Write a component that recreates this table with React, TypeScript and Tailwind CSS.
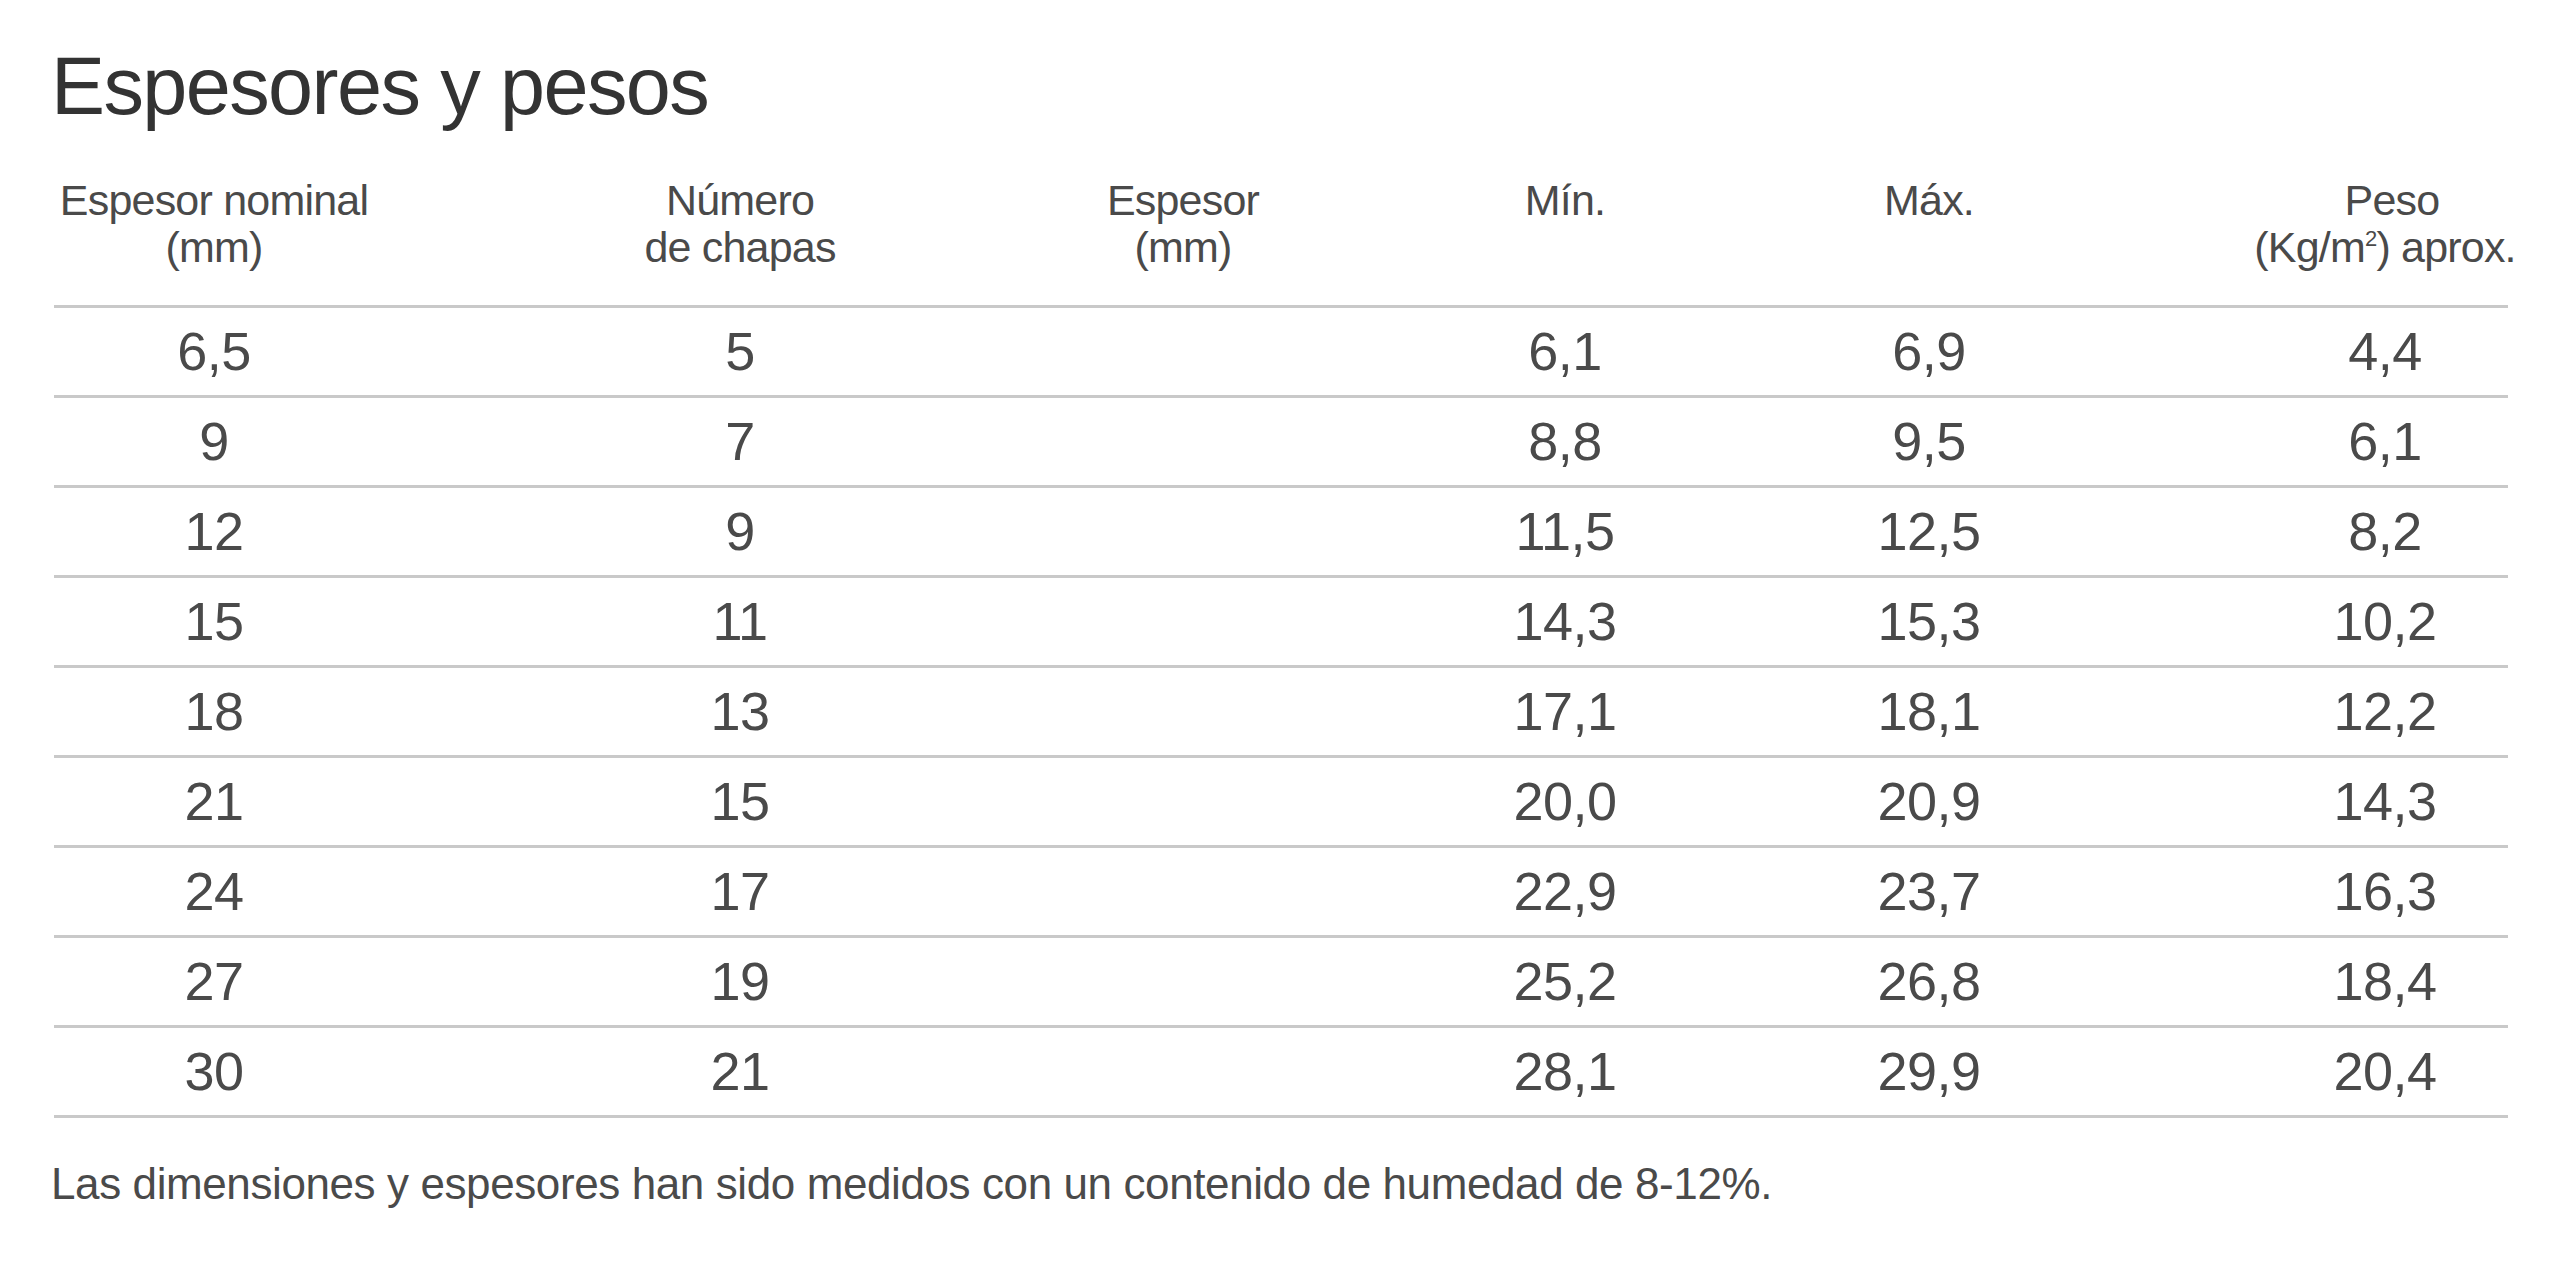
import React from "react";

// Spacing before each column cell, so the centred text lands under its header
const COLS = ["ml-[40px]", "ml-[286px]", "ml-[203px]", "ml-[142px]", "ml-[124px]", "ml-[216px]"];

const rows: string[][] = [
    ["6,5", "5", "", "6,1", "6,9", "4,4"],
    ["9", "7", "", "8,8", "9,5", "6,1"],
    ["12", "9", "", "11,5", "12,5", "8,2"],
    ["15", "11", "", "14,3", "15,3", "10,2"],
    ["18", "13", "", "17,1", "18,1", "12,2"],
    ["21", "15", "", "20,0", "20,9", "14,3"],
    ["24", "17", "", "22,9", "23,7", "16,3"],
    ["27", "19", "", "25,2", "26,8", "18,4"],
    ["30", "21", "", "28,1", "29,9", "20,4"],
];

function HeaderCell({ col, children }: { col: number; children: React.ReactNode }) {
    return (
        <div className={`${COLS[col]} w-[240px] shrink-0 flex flex-col items-center whitespace-nowrap`}>
            {children}
        </div>
    );
}

export default function App() {
    return (
        <div
            className="min-h-screen w-full bg-white pl-[51px] pt-[46px] text-[#4a4a4a]"
            style={{ fontFamily: '"Liberation Sans", Arial, sans-serif' }}
        >
            <h1 className="text-[81px] leading-[81px] tracking-[-1.6px] text-[#333333]">
                Espesores y pesos
            </h1>

            <div className="ml-[3px] w-[2454px]">
                {/* header */}
                <div className="mt-[50px] flex items-start border-b-[3px] border-[#c9c9c9] pb-[34px] text-[43px] leading-[47px] tracking-[-0.8px]">
                    <HeaderCell col={0}>
                        <span>Espesor nominal</span>
                        <span>(mm)</span>
                    </HeaderCell>
                    <HeaderCell col={1}>
                        <span>Número</span>
                        <span>de chapas</span>
                    </HeaderCell>
                    <HeaderCell col={2}>
                        <span>Espesor</span>
                        <span>(mm)</span>
                    </HeaderCell>
                    <HeaderCell col={3}>
                        <span>Mín.</span>
                    </HeaderCell>
                    <HeaderCell col={4}>
                        <span>Máx.</span>
                    </HeaderCell>
                    <HeaderCell col={5}>
                        <span className="ml-[14px]">Peso</span>
                        <span>
                            (Kg/m<sup className="-top-[16px] text-[22px]">2</sup>) aprox.
                        </span>
                    </HeaderCell>
                </div>

                {/* body */}
                {rows.map((row, i) => (
                    <div key={i} className="flex h-[90px] items-center border-b-[3px] border-[#c9c9c9] text-[54px] tracking-[-0.5px]">
                        {row.map((value, j) => (
                            <div key={j} className={`${COLS[j]} w-[240px] shrink-0 text-center whitespace-nowrap`}>
                                {value}
                            </div>
                        ))}
                    </div>
                ))}
            </div>

            <p className="mt-[41px] text-[44px] leading-[50px] tracking-[-0.4px]">
                Las dimensiones y espesores han sido medidos con un contenido de humedad de 8-12%.
            </p>
        </div>
    );
}
